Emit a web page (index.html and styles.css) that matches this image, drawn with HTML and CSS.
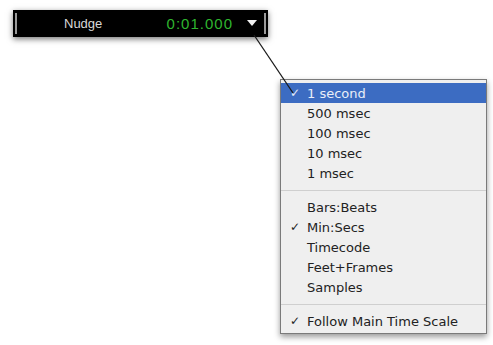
FILE: index.html
```html
<!DOCTYPE html>
<html lang="en">
<head>
  <meta charset="UTF-8" />
  <title>Nudge menu</title>
  <link rel="stylesheet" href="styles.css">
</head>
<body>

  <!-- NUDGE BAR -->
  <div class="nudge-bar">
    <span class="cap"></span>
    <span class="label">Nudge</span>
    <span class="time">0:01.000</span>
    <span class="arrow"></span>
    <span class="cap"></span>
  </div>

  <!-- POPUP MENU -->
  <div class="menu">
    <div class="item active"><span class="check">✓</span>1 second</div>
    <div class="item"><span class="check"></span>500 msec</div>
    <div class="item"><span class="check"></span>100 msec</div>
    <div class="item"><span class="check"></span>10 msec</div>
    <div class="item"><span class="check"></span>1 msec</div>
    <div class="sep"></div>
    <div class="item"><span class="check"></span>Bars:Beats</div>
    <div class="item"><span class="check">✓</span>Min:Secs</div>
    <div class="item"><span class="check"></span>Timecode</div>
    <div class="item"><span class="check"></span>Feet+Frames</div>
    <div class="item"><span class="check"></span>Samples</div>
    <div class="sep"></div>
    <div class="item"><span class="check">✓</span>Follow Main Time Scale</div>
  </div>

  <!-- pointer line from arrow to menu -->
  <svg class="pointer" width="493" height="345">
    <line x1="254" y1="35" x2="293" y2="93" stroke="#1a1a1a" stroke-width="1.3" />
  </svg>

</body>
</html>
```

FILE: styles.css
```css
* {
  margin: 0; padding: 0;
  box-sizing: border-box;
}

body, html {
  height: 100%;
  overflow: hidden;
  background: #fff;
}

body {
  position: relative;
  padding-top: 10px;
}

.nudge-bar {
  display: flex;
  align-items: center;
  width: 255px;
  height: 27px;
  margin-left: 13px;
  padding: 0 2px;
  background: #000;
  box-shadow: 0 2px 6px rgba(0, 0, 0, 0.55);
  font-family: 'Liberation Sans', Arial, sans-serif;
}

.cap {
  width: 2px;
  height: 21px;
  background: #9a9a9a;
}

.label {
  margin-left: 47px;
  font-size: 13px;
  color: #d8d8d8;
}

.time {
  margin-left: auto;
  font-size: 15px;
  letter-spacing: 1px;
  color: #2fb52f;
}

.arrow {
  width: 0; height: 0;
  margin: 0 7px 2px 14px;
  border-left: 5px solid transparent;
  border-right: 5px solid transparent;
  border-top: 6px solid #f2f2f2;
}

.menu {
  width: 207px;
  margin: 42px 0 0 280px;
  padding: 3px 0 2px;
  background: #efefef;
  border: 1px solid #7a7a7a;
  box-shadow: 0 3px 6px rgba(0, 0, 0, 0.4);
  font-family: 'DejaVu Sans', sans-serif;
  font-size: 13px;
  color: #222;
}

.item {
  display: flex;
  align-items: center;
  height: 20px;
}

.item.active {
  background: #3c6cc2;
  color: #e9eef8;
}

.check {
  width: 26px;
  padding-left: 9px;
  font-size: 12px;
  font-weight: bold;
}

.sep {
  height: 14px;
  display: flex;
  align-items: center;
}

.sep::before {
  content: "";
  flex: 1;
  height: 1px;
  background: #cfcfcf;
}

.pointer {
  position: absolute;
  top: 0; left: 0;
  pointer-events: none;
}
```
